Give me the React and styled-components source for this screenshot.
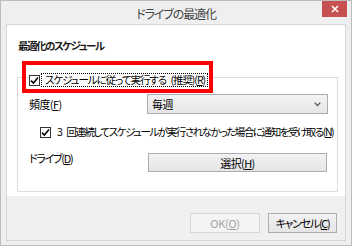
import React from "react";
import styled, { createGlobalStyle } from "styled-components";

const GlobalStyle = createGlobalStyle`
  html, body { margin: 0; padding: 0; background: #ffffff; }
  body {
    font-family: "Noto Sans CJK JP", "Noto Sans", sans-serif;
    font-feature-settings: "palt";
    color: #000;
  }
  * { box-sizing: border-box; }
`;

const Window = styled.div`
  width: 352px;
  height: 246px;
  border: 1px solid #bdbdbd;
  background: #efefef;
  display: flex;
  flex-direction: column;
`;

const TitleBar = styled.div`
  height: 23px;
  display: grid;
  grid-template-columns: 1fr auto 1fr;
  align-items: start;
`;

const Title = styled.div`
  grid-column: 2;
  padding-top: 5px;
  font-size: 12px;
  letter-spacing: -1.1px;
  line-height: 16px;
  color: #444;
  white-space: nowrap;
`;

const CloseButton = styled.div`
  grid-column: 3;
  justify-self: end;
  margin-right: 4px;
  width: 25px;
  height: 16px;
  background: #c75050;
  display: flex;
  align-items: center;
  justify-content: center;
`;

const Client = styled.div`
  flex: 1;
  margin: 0 5px 4px 5px;
  border: 1px solid #d6d6d6;
  background: #fff;
  display: flex;
  flex-direction: column;
`;

const Body = styled.div`
  flex: 1;
  padding: 13px 7px 3px 10px;
  display: flex;
  flex-direction: column;
`;

const Heading = styled.div`
  padding-left: 1px;
  font-size: 10.5px;
  font-weight: bold;
  letter-spacing: -1.5px;
  line-height: 16px;
  color: #1a1a1a;
`;

const Group = styled.fieldset`
  margin: 13px 0 0 0;
  padding: 7px 9px 19px 11px;
  border: 1px solid #dcdcdc;
  min-width: 0;
`;

const Legend = styled.legend`
  padding: 6px 0 0 0;
  position: relative;
`;

const LegendInner = styled.div`
  display: flex;
  align-items: center;
  gap: 1px;
`;

const RedMark = styled.div`
  position: absolute;
  left: -7px;
  top: -6px;
  width: 191px;
  height: 32px;
  border: 4px solid #ff0000;
  pointer-events: none;
`;

const Box = styled.span`
  width: 11px;
  height: 11px;
  border: 1px solid #333;
  background: #fff;
  display: inline-flex;
  align-items: center;
  justify-content: center;
  flex: none;
`;

const FocusLabel = styled.span`
  border: 1px dotted #000;
  padding: 0 2px 0 3px;
  font-size: 10.5px;
  line-height: 12px;
  white-space: nowrap;
  letter-spacing: -1.05px;
  word-spacing: 3px;
`;

const Text = styled.span`
  font-size: ${(p) => p.$fs || 11}px;
  line-height: 14px;
  white-space: nowrap;
  letter-spacing: ${(p) => p.$ls ?? -0.8}px;
  word-spacing: ${(p) => p.$ws || 0}px;
  color: ${(p) => (p.$disabled ? "#a3a3a3" : "#000")};
`;

const FieldRow = styled.div`
  display: grid;
  grid-template-columns: 118px 1fr;
  align-items: ${(p) => p.$align || "center"};
  margin-top: ${(p) => p.$mt || 0}px;
`;

const Select = styled.div`
  height: 20px;
  border: 1px solid #acacac;
  background: linear-gradient(#f3f3f3, #e6e6e6);
  display: flex;
  align-items: center;
  justify-content: space-between;
  padding: 0 6px 0 4px;
`;

const CheckRow = styled.div`
  margin-top: 10px;
  padding-left: 11px;
  height: 16px;
  display: flex;
  align-items: center;
  gap: 6px;
`;

const PushButton = styled.div`
  height: ${(p) => p.$h || 20}px;
  width: ${(p) => (p.$w ? `${p.$w}px` : "auto")};
  margin: ${(p) => p.$margin || 0};
  border: 1px solid ${(p) => (p.$disabled ? "#d6d6d6" : "#adadad")};
  background: ${(p) =>
    p.$disabled ? "#f4f4f4" : "linear-gradient(#f2f2f2, #e5e5e5)"};
  display: flex;
  align-items: center;
  justify-content: center;
`;

const Footer = styled.div`
  height: 44px;
  background: #f0f0f0;
  display: flex;
  justify-content: flex-end;
  align-items: flex-end;
  gap: 8px;
  padding: 0 8px 7px 0;
`;

const Check = () => (
  <Box>
    <svg width="9" height="9" viewBox="0 0 9 9">
      <path d="M1 4.6 L3.4 7 L8 1.6" fill="none" stroke="#000" strokeWidth="1.6" />
    </svg>
  </Box>
);

export default function App() {
  return (
    <>
      <GlobalStyle />
      <Window>
        <TitleBar>
          <Title>ドライブの最適化</Title>
          <CloseButton>
            <svg width="8" height="8" viewBox="0 0 8 8">
              <path d="M1 1 L7 7 M7 1 L1 7" stroke="#fff" strokeWidth="1.6" />
            </svg>
          </CloseButton>
        </TitleBar>
        <Client>
          <Body>
            <Heading>最適化のスケジュール</Heading>
            <Group>
              <Legend>
                <LegendInner>
                  <Check />
                  <FocusLabel>
                    スケジュールに従って実行する (推奨)(<u>R</u>)
                  </FocusLabel>
                </LegendInner>
                <RedMark />
              </Legend>
              <FieldRow>
                <Text $ls={-0.6}>
                  頻度(<u>F</u>)
                </Text>
                <Select>
                  <Text $ls={-0.6}>毎週</Text>
                  <svg width="7" height="5" viewBox="0 0 7 5">
                    <path d="M0.8 0.8 L3.5 3.6 L6.2 0.8" fill="none" stroke="#555" strokeWidth="1.3" />
                  </svg>
                </Select>
              </FieldRow>
              <CheckRow>
                <Check />
                <Text $fs={10.5} $ls={-1.45} $ws={4}>
                  3 回連続してスケジュールが実行されなかった場合に通知を受け取る(<u>N</u>)
                </Text>
              </CheckRow>
              <FieldRow $align="start" $mt={11}>
                <Text $ls={-1.3}>
                  ドライブ(<u>D</u>)
                </Text>
                <PushButton $h={19} $margin="2px 1px 0 1px">
                  <Text $ls={-0.6}>
                    選択(<u>H</u>)
                  </Text>
                </PushButton>
              </FieldRow>
            </Group>
          </Body>
          <Footer>
            <PushButton $w={70} $disabled>
              <Text $disabled $ls={-0.3}>
                OK(<u>O</u>)
              </Text>
            </PushButton>
            <PushButton $w={69}>
              <Text $ls={-1.3}>
                キャンセル(<u>C</u>)
              </Text>
            </PushButton>
          </Footer>
        </Client>
      </Window>
    </>
  );
}
